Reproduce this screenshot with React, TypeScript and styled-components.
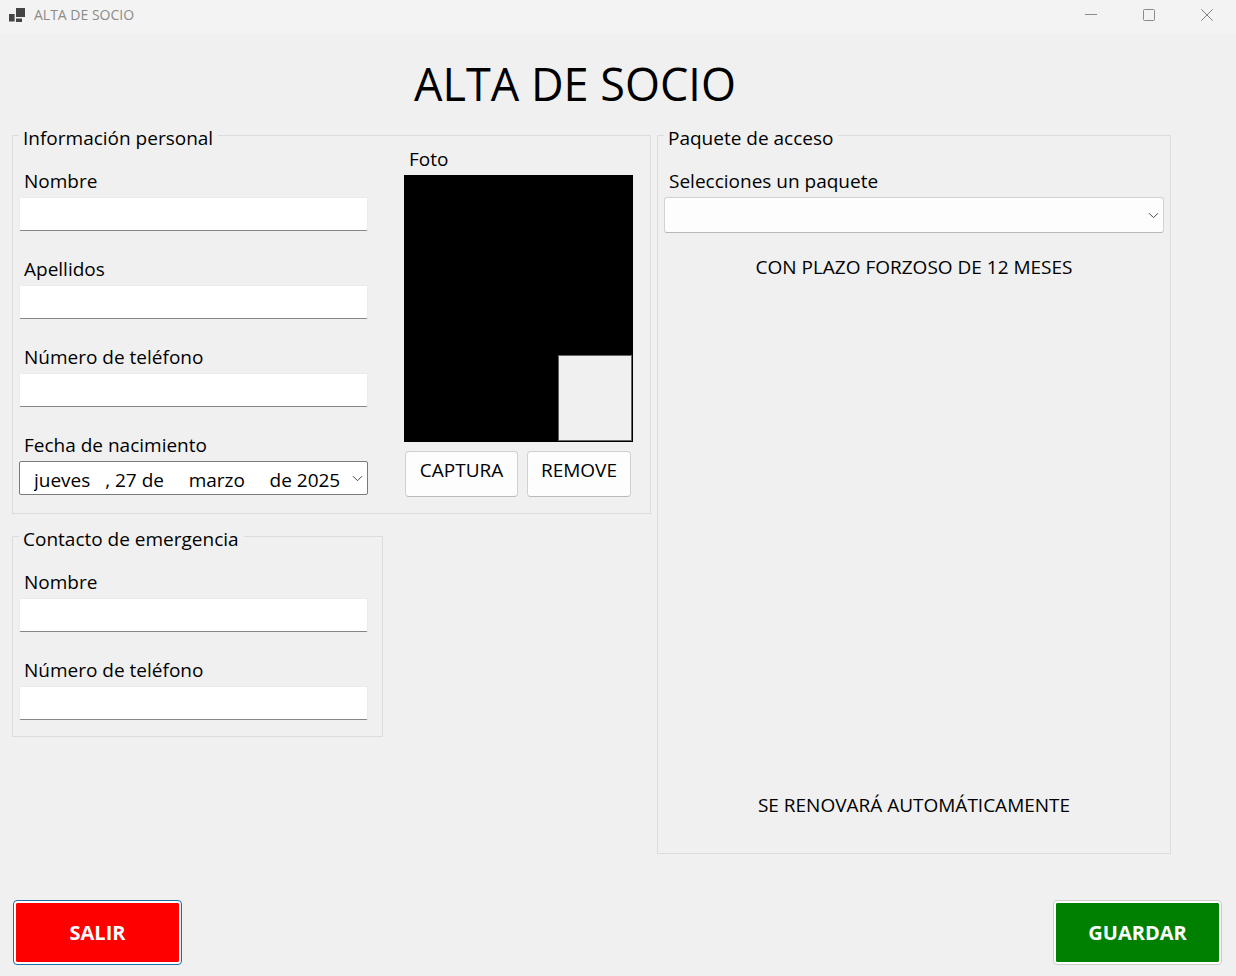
import React, { useId } from "react";
import styled, { createGlobalStyle } from "styled-components";

const GlobalStyle = createGlobalStyle`
  *, *::before, *::after { box-sizing: border-box; }
  body {
    margin: 0;
    background: #f0f0f0;
    color: #000;
    font-family: "Open Sans", "Noto Sans", sans-serif;
    font-size: 19px;
    line-height: 22px;
  }
  button, input, select { font: inherit; color: inherit; }
`;

const Window = styled.div`
  display: flex;
  flex-direction: column;
  min-height: 100vh;
`;

const TitleBar = styled.header`
  display: flex;
  align-items: center;
  height: 34px;
  padding-left: 9px;
  background: #f3f3f3;
  color: #8b8b8b;
  font-size: 14px;
  line-height: 20px;
`;

const AppIcon = styled.svg`
  width: 16px;
  height: 16px;
  margin: 0 9px 2px 0;
`;

const Caption = styled.span`
  flex: 1;
  padding-bottom: 4px;
`;

const WindowButton = styled.button`
  display: flex;
  align-items: center;
  justify-content: center;
  width: 58px;
  height: 30px;
  margin-bottom: 4px;
  padding: 0;
  border: 0;
  background: transparent;
`;

const Heading = styled.h1`
  margin: 0;
  padding: 20px 86px 8px 0;
  font-size: 45px;
  font-weight: 400;
  line-height: 60px;
  text-align: center;
`;

const Form = styled.form`
  display: flex;
  flex: 1;
  flex-direction: column;
`;

const Panels = styled.div`
  display: grid;
  flex: 1;
  grid-template-columns: 639fr 514fr;
  gap: 6px;
  padding: 0 65px 0 12px;
`;

const Column = styled.div`
  display: flex;
  flex-direction: column;
  gap: 9px;
`;

const Group = styled.fieldset<{ $width?: string }>`
  width: ${(p) => p.$width ?? "auto"};
  min-width: 0;
  margin: 0;
  padding: 0 6px 16px;
  border: 1px solid #dcdcdc;
`;

const GroupTitle = styled.legend`
  padding: 6px 5px 0 4px;
  line-height: 20px;
`;

const PersonalLayout = styled.div`
  display: grid;
  grid-template-columns: 349fr 229fr;
  column-gap: 36px;
  padding-right: 11px;
`;

const Fields = styled.div<{ $end?: number }>`
  display: flex;
  flex-direction: column;
  gap: 27px;
  padding: 22px ${(p) => p.$end ?? 0}px 0 0;
`;

const FieldLabel = styled.label`
  display: block;
  padding: 0 5px 5px;
`;

const TextBox = styled.input`
  display: block;
  width: 100%;
  height: 34px;
  padding: 0 8px;
  border: 1px solid #ebebeb;
  border-bottom-color: #868686;
  border-radius: 2px;
  background: #fff;
`;

const PickerFrame = styled.div`
  position: relative;
`;

const DateBox = styled(TextBox)`
  padding: 3px 20px 0 14px;
  border-color: #7a7a7a;
`;

const PackageSelect = styled.select`
  display: block;
  width: 100%;
  height: 36px;
  padding: 0 24px 0 8px;
  border: 1px solid #d2d2d2;
  border-bottom-color: #b8b8b8;
  border-radius: 3px;
  background: #fdfdfd;
  appearance: none;
`;

const Chevron = styled.svg`
  position: absolute;
  top: 50%;
  right: 5px;
  width: 11px;
  height: 7px;
  margin-top: -3px;
  pointer-events: none;
`;

const PhotoTitle = styled.div`
  padding: 0 5px 5px;
`;

const Photo = styled.div`
  display: flex;
  align-items: flex-end;
  justify-content: flex-end;
  height: 267px;
  padding: 1px;
  background: #000;
`;

const Thumbnail = styled.div`
  width: 74px;
  height: 86px;
  border: 1px solid #646464;
  background: #f0f0f0;
`;

const PhotoActions = styled.div`
  display: grid;
  grid-template-columns: 113fr 104fr;
  gap: 9px;
  padding: 9px 2px 0 1px;
`;

const PhotoButton = styled.button`
  height: 46px;
  padding: 0 0 8px;
  border: 1px solid #d0d0d0;
  border-bottom-color: #bababa;
  border-radius: 4px;
  background: #fdfdfd;
`;

const PackageLayout = styled.div`
  display: flex;
  flex-direction: column;
  height: 100%;
  padding-top: 22px;
`;

const Note = styled.p<{ $last?: boolean }>`
  margin: ${(p) => (p.$last ? "auto 0 21px" : "23px 0 0")};
  text-align: center;
`;

const Footer = styled.footer`
  display: flex;
  justify-content: space-between;
  padding: 46px 14px 11px 13px;
`;

const ActionButton = styled.button<{ $fill: string; $ring: string }>`
  width: 169px;
  height: 65px;
  padding: 2px;
  border: 1px solid ${(p) => p.$ring};
  border-radius: 4px;
  background: ${(p) => p.$fill} content-box;
  box-shadow: inset 0 0 0 2px #fff;
  color: #fff;
  font-size: 20px;
  font-weight: 700;
`;

function Arrow() {
  return (
    <Chevron viewBox="0 0 11 7" aria-hidden="true">
      <path d="M1 1.2 5.5 5.7 10 1.2" fill="none" stroke="#4a4a4a" strokeWidth="1" />
    </Chevron>
  );
}

function TextField({ label, type = "text" }: { label: string; type?: string }) {
  const id = useId();
  return (
    <div>
      <FieldLabel htmlFor={id}>{label}</FieldLabel>
      <TextBox id={id} type={type} />
    </div>
  );
}

export default function App() {
  return (
    <>
      <GlobalStyle />
      <Window>
        <TitleBar>
          <AppIcon viewBox="0 0 16 16" aria-hidden="true">
            <path d="M7 0h9v9H7zM0 6h5.6v7.4H0zM7 10.4h6V14H7z" fill="#444" />
          </AppIcon>
          <Caption>ALTA DE SOCIO</Caption>
          <WindowButton type="button" aria-label="Minimizar">
            <svg width="12" height="12" viewBox="0 0 12 12">
              <path d="M0 5.5h12" stroke="#8b8b8b" />
            </svg>
          </WindowButton>
          <WindowButton type="button" aria-label="Maximizar">
            <svg width="12" height="12" viewBox="0 0 12 12">
              <rect x=".5" y=".5" width="11" height="11" rx="1" fill="none" stroke="#8b8b8b" />
            </svg>
          </WindowButton>
          <WindowButton type="button" aria-label="Cerrar">
            <svg width="12" height="12" viewBox="0 0 12 12">
              <path d="m.3.3 11.4 11.4M11.7.3.3 11.7" stroke="#808080" />
            </svg>
          </WindowButton>
        </TitleBar>

        <Heading>ALTA DE SOCIO</Heading>

        <Form onSubmit={(e) => e.preventDefault()}>
          <Panels>
            <Column>
              <Group>
                <GroupTitle>Información personal</GroupTitle>
                <PersonalLayout>
                  <Fields>
                    <TextField label="Nombre" />
                    <TextField label="Apellidos" />
                    <TextField label="Número de teléfono" type="tel" />
                    <div>
                      <FieldLabel htmlFor="nacimiento">Fecha de nacimiento</FieldLabel>
                      <PickerFrame>
                        <DateBox
                          id="nacimiento"
                          type="text"
                          defaultValue={"jueves   , 27 de     marzo     de 2025"}
                        />
                        <Arrow />
                      </PickerFrame>
                    </div>
                  </Fields>
                  <div>
                    <PhotoTitle>Foto</PhotoTitle>
                    <Photo>
                      <Thumbnail />
                    </Photo>
                    <PhotoActions>
                      <PhotoButton type="button">CAPTURA</PhotoButton>
                      <PhotoButton type="button">REMOVE</PhotoButton>
                    </PhotoActions>
                  </div>
                </PersonalLayout>
              </Group>

              <Group $width="58%">
                <GroupTitle>Contacto de emergencia</GroupTitle>
                <Fields $end={8}>
                  <TextField label="Nombre" />
                  <TextField label="Número de teléfono" type="tel" />
                </Fields>
              </Group>
            </Column>

            <Group>
              <GroupTitle>Paquete de acceso</GroupTitle>
              <PackageLayout>
                <FieldLabel htmlFor="paquete">Selecciones un paquete</FieldLabel>
                <PickerFrame>
                  <PackageSelect id="paquete" defaultValue="">
                    <option value="" />
                  </PackageSelect>
                  <Arrow />
                </PickerFrame>
                <Note>CON PLAZO FORZOSO DE 12 MESES</Note>
                <Note $last>SE RENOVARÁ AUTOMÁTICAMENTE</Note>
              </PackageLayout>
            </Group>
          </Panels>

          <Footer>
            <ActionButton type="button" $fill="#ff0000" $ring="#1c6ea8">
              SALIR
            </ActionButton>
            <ActionButton type="submit" $fill="#008000" $ring="#cccccc">
              GUARDAR
            </ActionButton>
          </Footer>
        </Form>
      </Window>
    </>
  );
}
